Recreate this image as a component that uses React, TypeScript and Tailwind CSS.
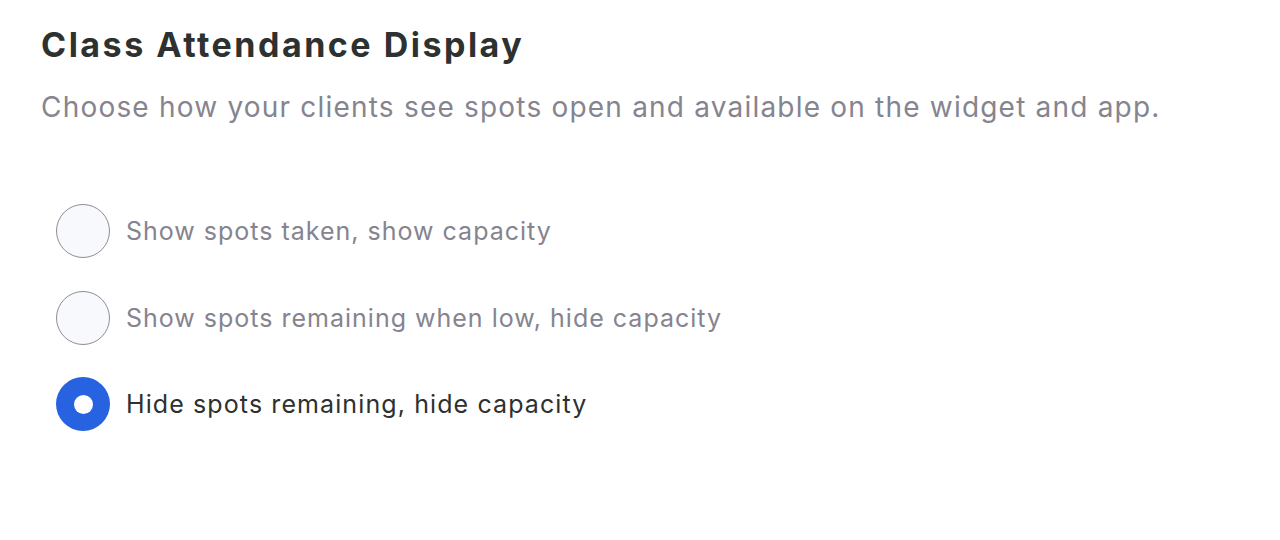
import { useState } from "react";

const options = [
  "Show spots taken, show capacity",
  "Show spots remaining when low, hide capacity",
  "Hide spots remaining, hide capacity",
];

export default function App() {
  const [selected, setSelected] = useState(2);

  return (
    <div className="min-h-[540px] w-[1280px] bg-white px-[41px] pt-[24px] font-['Inter','Liberation_Sans',sans-serif]">
      <h1 className="text-[34px] font-bold leading-[41px] tracking-[2.5px] text-[#2d3130]">Class Attendance Display</h1>
      <p className="mt-[24px] text-[28px] leading-[36px] tracking-[1.2px] text-[#85848f]">
        Choose how your clients see spots open and available on the widget and app.
      </p>

      <div className="mt-[79px] flex flex-col gap-[32.5px] pl-[15px]">
        {options.map((label, i) => {
          const active = i === selected;
          return (
            <button
              key={label}
              type="button"
              onClick={() => setSelected(i)}
              className="flex items-center gap-[16px] text-left"
            >
              {active ? (
                <span className="flex h-[54px] w-[54px] shrink-0 items-center justify-center rounded-full bg-[#2762e0]">
                  <span className="h-[19px] w-[19px] rounded-full bg-white" />
                </span>
              ) : (
                <span className="h-[54px] w-[54px] shrink-0 rounded-full border border-[#8e8d96] bg-[#f8f9fc]" />
              )}
              <span
                className={
                  active
                    ? "text-[25px] leading-[30px] tracking-[1.1px] text-[#2d3130]"
                    : "text-[25px] leading-[30px] tracking-[1px] text-[#85848f]"
                }
              >
                {label}
              </span>
            </button>
          );
        })}
      </div>
    </div>
  );
}
